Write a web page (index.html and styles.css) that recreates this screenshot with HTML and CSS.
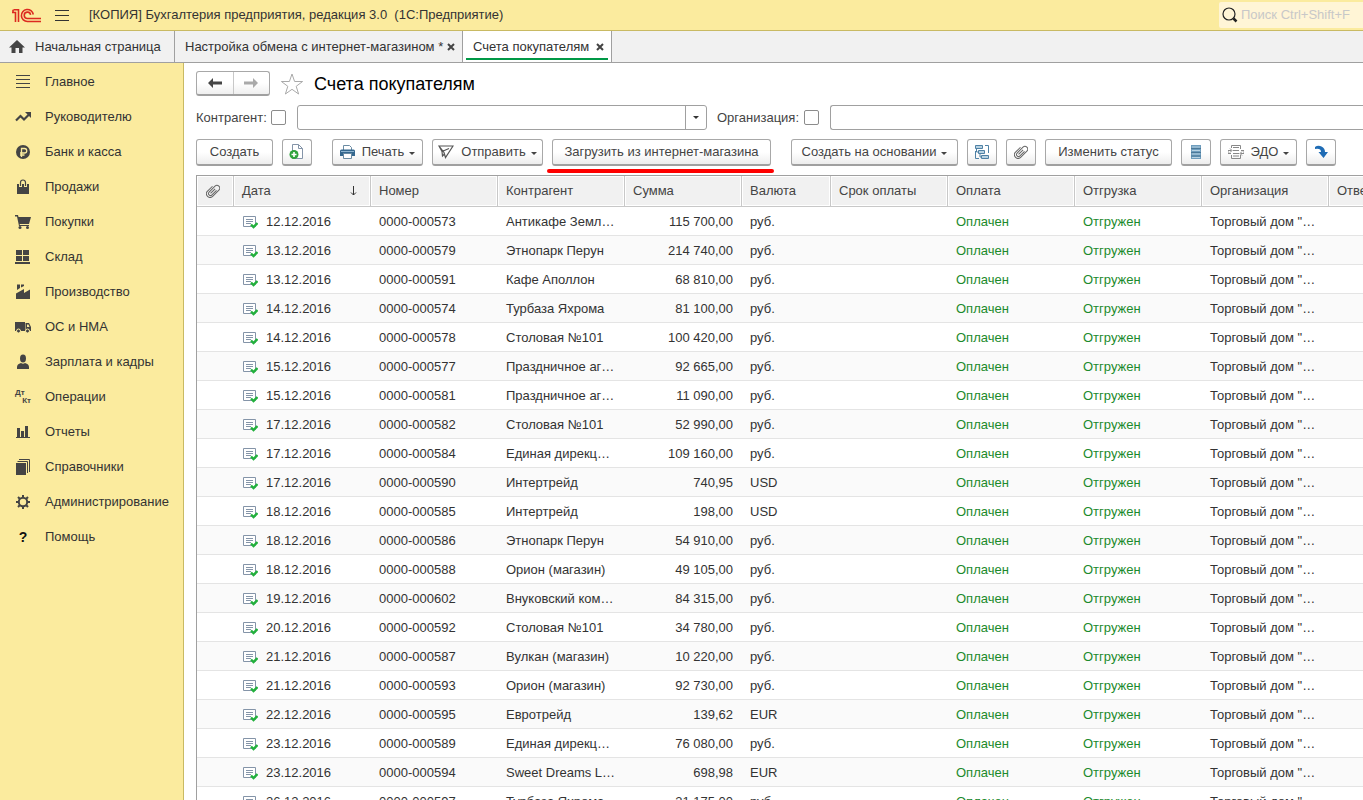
FILE: index.html
```html
<!DOCTYPE html>
<html lang="ru">
  <head>
    <meta charset="UTF-8">
    <title>Счета покупателям</title>
    <link rel="stylesheet" href="styles.css">
  </head>
  <body>
    <!-- Общие иконки -->
    <svg class="sprite" aria-hidden="true">
      <symbol id="clip" viewBox="0 0 14 14"><g transform="rotate(45 7 7)" fill="none" stroke="currentColor" stroke-width="1"><path d="M9 4v6.500a2 2 0 0 1-4 0V2.200a2.500 2.500 0 0 1 5.500 0V11a3.600 3.600 0 0 1-7.200 0V4M7 4v6.500"/></g></symbol>
      <symbol id="doc" viewBox="0 0 16 14"><path d="M1.500 1.500h12v10h-12z" fill="#fff" stroke="#8494a8"/><path d="M4 4.500h7M4 6.500h7M4 8.500h5" stroke="#8494a8"/><path d="M9 9.500l2.500 2.500 4-4" fill="none" stroke="#22b03c" stroke-width="2.400"/></symbol>
      <symbol id="caret" viewBox="0 0 6 3"><path d="M0 0h6L3 3z" fill="currentColor"/></symbol>
    </svg>

    <header class="topbar">
      <svg class="logo" viewBox="0 0 30 15" width="30" height="15" fill="none" stroke="#dc2a20" stroke-width="1.600"><path d="M0 4.500h3.500V14M1.500 1.800h5V14M1 1.800v2.500"/><path d="M21.300 6.500A6 6 0 1 0 15.500 13.500H29"/><path d="M18.600 6.800A3.200 3.200 0 1 0 15.500 10.500H29"/></svg>
      <button class="menu" aria-label="Меню"><svg width="14" height="11" stroke="#333"><path d="M0 .5h14M0 5.500h14M0 10.500h14"/></svg></button>
      <span class="app-name">[КОПИЯ] Бухгалтерия предприятия, редакция 3.0 &nbsp;(1С:Предприятие)</span>
      <label class="search">
        <svg width="16" height="16" fill="none" stroke="#222"><circle cx="7" cy="7" r="6" stroke-width="1.200"/><path d="M11.500 11.500l3 3" stroke-width="2.500"/></svg>
        <input type="text" placeholder="Поиск Ctrl+Shift+F" aria-label="Поиск">
      </label>
    </header>

    <nav class="tabs">
      <a href="#" class="tab home"><svg width="16" height="14" fill="#444"><path d="M8 0l8 7.500h-2.500V13H10V8H6.500v5H2.500V7.500H0z"/></svg>Начальная страница</a>
      <a href="#" class="tab exchange">Настройка обмена с интернет-магазином *<svg class="close" viewBox="0 0 8 8"><path d="M1 1l6 6M7 1L1 7"/></svg></a>
      <a href="#" class="tab active">Счета покупателям<svg class="close" viewBox="0 0 8 8"><path d="M1 1l6 6M7 1L1 7"/></svg></a>
    </nav>

    <div class="layout">
      <nav class="sidebar">
        <a href="#"><svg viewBox="0 0 16 16" stroke="#444"><path d="M1 1.500h14M1 5.500h14M1 9.500h14M1 13.500h14"/></svg>Главное</a>
        <a href="#"><svg viewBox="0 0 16 16"><path d="M1 11.500l4.500-4.500 3.500 3.500 5-5" fill="none" stroke="#444" stroke-width="2.200"/><path d="M10 3h6v6z"/></svg>Руководителю</a>
        <a href="#"><svg viewBox="0 0 16 16"><circle cx="8" cy="8" r="7"/><path d="M6.500 13V4.500h3a2 2 0 0 1 0 4.500H5M5 11h4.500" fill="none" stroke="#faeb9e" stroke-width="1.300"/></svg>Банк и касса</a>
        <a href="#"><svg viewBox="0 0 16 16"><path d="M2 5h12v10H2z"/><path d="M5.500 8V3.500a2.500 2.500 0 0 1 5 0V8" fill="none" stroke="#faeb9e" stroke-width="3"/><path d="M5.500 7V3.500a2.500 2.500 0 0 1 5 0V7" fill="none" stroke="#444" stroke-width="1.200"/></svg>Продажи</a>
        <a href="#"><svg viewBox="0 0 16 16"><path d="M0 1h3l.5 2H16l-2 7H4.500l.5 1h9v1H4L2 2.500H0z"/><circle cx="5" cy="13.500" r="1.500"/><circle cx="12.500" cy="13.500" r="1.500"/></svg>Покупки</a>
        <a href="#"><svg viewBox="0 0 16 16"><path d="M1 1h6v5H1zM8 1h6v5H8zM1 7h6v5H1zM8 7h6v5H8zM0 13h15v2H0z"/></svg>Склад</a>
        <a href="#"><svg viewBox="0 0 16 16"><path d="M1 15V9.500l8-4.500v4l6-3.500V15zM2 .5h3v3.500L2 6zM6 .5h3v1.500L6 3.500z"/></svg>Производство</a>
        <a href="#"><svg viewBox="0 0 16 16"><path d="M0 3h10v9H0zM10.500 4H14l2 4v4h-5.500z"/><path d="M12 5.500h1.500l1 2.500H12z" fill="#faeb9e"/><circle cx="3.500" cy="12" r="2" stroke="#faeb9e"/><circle cx="12.500" cy="12" r="2" stroke="#faeb9e"/></svg>ОС и НМА</a>
        <a href="#"><svg viewBox="0 0 16 16"><ellipse cx="8" cy="4.500" rx="3" ry="4"/><path d="M2 15v-2q0-3 4-4 2 1.500 4 0 4 1 4 4v2z"/></svg>Зарплата и кадры</a>
        <a href="#"><span class="dtkt" aria-hidden="true"><i>Дт</i><i>Кт</i></span>Операции</a>
        <a href="#"><svg viewBox="0 0 16 16"><path d="M2 4h3v9H2zM6 7h3v6H6zM10 2h3v11h-3zM1 13h14v1H1z"/></svg>Отчеты</a>
        <a href="#"><svg viewBox="0 0 16 16"><path d="M1 4h10v12H1z"/><path d="M2.500 2.500h10V14M4 .5h10.500V13" fill="none" stroke="#444"/></svg>Справочники</a>
        <a href="#"><svg viewBox="0 0 16 16" fill="none" stroke="#444"><circle cx="8" cy="8" r="4.200" stroke-width="2"/><path d="M8 1v2.500M8 12.500V15M1 8h2.500M12.500 8H15M3 3l2 2M11 11l2 2M3 13l2-2M11 5l2-2" stroke-width="2"/></svg>Администрирование</a>
        <a href="#"><span class="question" aria-hidden="true">?</span>Помощь</a>
      </nav>

      <main>
        <div class="title-row">
          <div class="history">
            <button aria-label="Назад"><svg width="14" height="10" fill="#444"><path d="M0 5l5-5v3.500h9v3H5V10z"/></svg></button>
            <button aria-label="Вперед"><svg width="14" height="10" fill="#aaa"><path d="M14 5L9 0v3.500H0v3h9V10z"/></svg></button>
          </div>
          <svg class="star" width="24" height="22" viewBox="0 0 24 22" fill="#fff" stroke="#aaa"><path d="M12 1l2.600 7.500h8l-6.400 4.800 2.400 7.700L12 16.300 5.400 21l2.400-7.700L1.400 8.500h8z"/></svg>
          <h1>Счета покупателям</h1>
        </div>

        <div class="filters">
          <label for="useContractor" class="name-contractor">Контрагент:</label>
          <input type="checkbox" id="useContractor">
          <div class="combo">
            <input type="text" aria-label="Контрагент">
            <button aria-label="Выбрать"><svg class="caret"><use href="#caret"/></svg></button>
          </div>
          <label for="useCompany" class="name-company">Организация:</label>
          <input type="checkbox" id="useCompany">
          <div class="combo wide">
            <input type="text" aria-label="Организация">
          </div>
        </div>

        <div class="toolbar">
          <div class="group">
            <button class="btn create">Создать</button>
            <button class="btn icon" aria-label="Скопировать"><svg width="16" height="16"><path d="M3.500.5h6l4 4v10h-10z" fill="#fff" stroke="#8494a8"/><path d="M9.500.5v4h4" fill="none" stroke="#8494a8"/><circle cx="5" cy="10.500" r="4.500" fill="#2fa33c"/><path d="M5 8v5M2.500 10.500h5" stroke="#fff" stroke-width="1.600"/></svg></button>
          </div>
          <div class="group">
            <button class="btn print"><svg width="15" height="14"><path d="M3.500.5h6l2 2v3h-8z" fill="#fff" stroke="#6a8ba3"/><path d="M0 6q0-1.500 1.500-1.500h12Q15 4.500 15 6v5H0z" fill="#35688f"/><path d="M1 6.500h13" stroke="#8fb5d0"/><path d="M3.500 8.500h8v5h-8z" fill="#fff" stroke="#6a8ba3"/></svg>Печать<svg class="caret"><use href="#caret"/></svg></button>
            <button class="btn send"><svg width="16" height="14" fill="none" stroke="#555" stroke-width="1.200"><path d="M1 1h14L7.500 12.500 6 7.500zM1 1l3 5.500L11 3.500M4 6.500L4.500 11l2-2"/></svg>Отправить<svg class="caret"><use href="#caret"/></svg></button>
            <div class="marked"><button class="btn load">Загрузить из интернет-магазина</button></div>
          </div>
          <div class="group">
            <button class="btn based">Создать на основании<svg class="caret"><use href="#caret"/></svg></button>
            <button class="btn icon" aria-label="Структура подчиненности"><svg width="16" height="16" fill="none" stroke="#4f81a5"><path d="M1.500 1.500h7v3h-7zM4.500 6.500h6v3h-6zM7.500 11.500h7v3h-7z" fill="#b8d2e2"/><path d="M11 1.500h3.500V9M1.500 7v7.500H5M2.500 4.500V8h2M6 9.500V13h1.500"/></svg></button>
            <button class="btn icon" aria-label="Файлы"><svg class="clip"><use href="#clip"/></svg></button>
            <button class="btn status">Изменить статус</button>
            <button class="btn icon" aria-label="Реестр"><svg width="10" height="14"><path d="M0 0h10v14H0z" fill="#6f9dbd"/><path d="M1 2h8M1 5.500h8M1 9h8M1 12.500h8" stroke="#b8d2e2"/><path d="M0 3.500h10M0 7.500h10M0 11h10" stroke="#4a7898"/></svg></button>
            <button class="btn edo"><svg width="16" height="14" fill="none" stroke="#888"><path d="M3.500 3V.5h9V4M3.500 10v3.500h9V10M5 2.500h6M5 5.500h6M5 8.500h6M5 11h6M0 5.500h3.500M2 3.500l2 2-2 2M0 5.500v3h3M16 8.500h-3.500M14 6.500l-2 2 2 2M16 8.500v-3h-3"/></svg>ЭДО<svg class="caret"><use href="#caret"/></svg></button>
            <button class="btn icon" aria-label="Перейти"><svg width="14" height="14" fill="#1f6cb5"><path d="M1 2q3-2 6.500-.5Q11 3 11 7h3l-4.500 6L4.500 7H7q0-4-6-3z"/></svg></button>
          </div>
        </div>

        <table class="invoices">
          <colgroup>
            <col class="c-file"><col class="c-date"><col class="c-text"><col class="c-text"><col class="c-sum"><col class="c-currency"><col class="c-sum"><col class="c-text"><col class="c-text"><col class="c-text"><col class="c-text">
          </colgroup>
          <thead>
            <tr>
              <th class="file"><svg class="clip"><use href="#clip"/></svg></th>
              <th>Дата<svg class="sort" width="7" height="10" fill="none" stroke="#333"><path d="M3.500 0v9M1 6.500L3.500 9 6 6.500"/></svg></th>
              <th>Номер</th>
              <th>Контрагент</th>
              <th>Сумма</th>
              <th>Валюта</th>
              <th>Срок оплаты</th>
              <th>Оплата</th>
              <th>Отгрузка</th>
              <th>Организация</th>
              <th>Ответственный</th>
            </tr>
          </thead>
          <tbody id="rows"></tbody>
        </table>
      </main>
    </div>

    <script>
      // дата, номер, контрагент, сумма, валюта
      var invoices = [
        ['12.12.2016', '0000-000573', 'Антикафе Земл…', '115 700,00', 'руб.'],
        ['13.12.2016', '0000-000579', 'Этнопарк Перун', '214 740,00', 'руб.'],
        ['13.12.2016', '0000-000591', 'Кафе Аполлон', '68 810,00', 'руб.'],
        ['14.12.2016', '0000-000574', 'Турбаза Яхрома', '81 100,00', 'руб.'],
        ['14.12.2016', '0000-000578', 'Столовая №101', '100 420,00', 'руб.'],
        ['15.12.2016', '0000-000577', 'Праздничное аг…', '92 665,00', 'руб.'],
        ['15.12.2016', '0000-000581', 'Праздничное аг…', '11 090,00', 'руб.'],
        ['17.12.2016', '0000-000582', 'Столовая №101', '52 990,00', 'руб.'],
        ['17.12.2016', '0000-000584', 'Единая дирекц…', '109 160,00', 'руб.'],
        ['17.12.2016', '0000-000590', 'Интертрейд', '740,95', 'USD'],
        ['18.12.2016', '0000-000585', 'Интертрейд', '198,00', 'USD'],
        ['18.12.2016', '0000-000586', 'Этнопарк Перун', '54 910,00', 'руб.'],
        ['18.12.2016', '0000-000588', 'Орион (магазин)', '49 105,00', 'руб.'],
        ['19.12.2016', '0000-000602', 'Внуковский ком…', '84 315,00', 'руб.'],
        ['20.12.2016', '0000-000592', 'Столовая №101', '34 780,00', 'руб.'],
        ['21.12.2016', '0000-000587', 'Вулкан (магазин)', '10 220,00', 'руб.'],
        ['21.12.2016', '0000-000593', 'Орион (магазин)', '92 730,00', 'руб.'],
        ['22.12.2016', '0000-000595', 'Евротрейд', '139,62', 'EUR'],
        ['23.12.2016', '0000-000589', 'Единая дирекц…', '76 080,00', 'руб.'],
        ['23.12.2016', '0000-000594', 'Sweet Dreams L…', '698,98', 'EUR'],
        ['26.12.2016', '0000-000597', 'Турбаза Яхрома', '31 175,00', 'руб.']
      ];

      document.getElementById('rows').innerHTML = invoices.map(function(r) {
        return '<tr><td></td>' +
          '<td><svg class="doc"><use href="#doc"/></svg>' + r[0] + '</td>' +
          '<td>' + r[1] + '</td>' +
          '<td>' + r[2] + '</td>' +
          '<td class="sum">' + r[3] + '</td>' +
          '<td>' + r[4] + '</td>' +
          '<td></td>' +
          '<td class="done">Оплачен</td>' +
          '<td class="done">Отгружен</td>' +
          '<td>Торговый дом "…</td>' +
          '<td></td></tr>';
      }).join('');
    </script>
  </body>
</html>
```
FILE: styles.css
```css
* { box-sizing: border-box; }
body { margin: 0; height: 100vh; overflow: hidden; display: flex; flex-direction: column; background: #fff; color: #333; font: 13px/16px "Liberation Sans", Arial, sans-serif; }
a { color: inherit; text-decoration: none; }
button, input { font: inherit; color: inherit; }
button { padding: 0; cursor: pointer; }
svg { flex: none; }
.sprite { display: none; }
.caret { width: 6px; height: 3px; }
.clip { width: 14px; height: 14px; color: #666; }

/* Шапка */
.topbar { flex: none; display: flex; align-items: center; height: 31px; padding-left: 12px; background: #fbeb9e; border-bottom: 1px solid #c9ba63; }
.menu { display: flex; margin: 0 20px 0 13px; background: none; border: 0; }
.app-name { white-space: nowrap; }
.search { display: flex; align-items: center; gap: 3px; width: 144px; height: 26px; margin-left: auto; padding-left: 3px; background: #fff5d6; border-radius: 2px 0 0 2px; }
.search input { width: 100%; min-width: 0; padding: 0; border: 0; outline: 0; background: none; }
.search input::placeholder { color: #c8c8c8; opacity: 1; }

/* Вкладки */
.tabs { flex: none; display: flex; height: 32px; background: #f1f1f1; border-bottom: 1px solid #a0a0a0; }
.tab { display: flex; align-items: center; justify-content: space-between; padding: 0 7px 0 10px; border-right: 1px solid #a0a0a0; white-space: nowrap; }
.tab.home { width: 175px; justify-content: flex-start; gap: 10px; padding-left: 9px; }
.tab.exchange { width: 288px; }
.tab.active { position: relative; width: 149px; background: #fff; }
.tab.active::after { content: ""; position: absolute; left: 3px; right: 3px; bottom: 2px; height: 2px; background: #009846; }
.close { width: 8px; height: 8px; stroke: #444; stroke-width: 2; }

.layout { flex: 1; display: flex; min-height: 0; }

/* Разделы */
.sidebar { flex: none; width: 184px; padding-top: 1px; background: #fbeb9e; border-right: 1px solid #c9ba63; }
.sidebar a { display: flex; align-items: center; gap: 14px; height: 35px; padding-left: 15px; white-space: nowrap; }
.sidebar svg { width: 16px; height: 16px; fill: #444; }
.sidebar svg[fill="none"] { fill: none; }
.question { width: 16px; text-align: center; font-weight: bold; font-size: 14px; color: #111; }
.dtkt { display: flex; flex-direction: column; width: 16px; font: bold 8px/8px "Liberation Sans", Arial, sans-serif; color: #444; }
.dtkt i { font-style: normal; }
.dtkt i:last-child { align-self: flex-end; }

main { flex: 1; min-width: 0; overflow: hidden; padding: 8px 0 0 12px; }
.title-row { display: flex; align-items: center; height: 25px; }
.history { display: flex; width: 74px; height: 25px; border: 1px solid #a8a8a8; border-bottom: 2px solid #a0a0a0; border-radius: 3px; background: linear-gradient(#fff 50%, #efefef); }
.history button { flex: 1; display: flex; align-items: center; justify-content: center; background: none; border: 0; }
.history button + button { border-left: 1px solid #c8c8c8; }
.star { margin: 0 10px; }
h1 { margin: 0; font-size: 18px; line-height: 24px; font-weight: normal; color: #000; }

/* Отбор */
.filters { display: flex; align-items: center; margin-top: 9px; }
.filters label { flex: none; white-space: nowrap; color: #444; }
.name-contractor { width: 75px; }
.name-company { width: 87px; margin-left: 10px; }
.filters input[type="checkbox"] { flex: none; appearance: none; width: 15px; height: 15px; margin: 0 11px 0 0; border: 1px solid #8c8c8c; border-radius: 2px; background: #fff; }
.combo { flex: none; display: flex; width: 410px; height: 25px; border: 1px solid #a0a0a0; border-radius: 3px; background: #fff; }
.combo.wide { flex: 1; width: auto; border-right: 0; border-radius: 3px 0 0 3px; }
.combo input { flex: 1; min-width: 0; padding: 0 6px; border: 0; outline: 0; background: none; }
.combo button { display: flex; align-items: center; justify-content: center; width: 21px; border: 0; border-left: 1px solid #a0a0a0; background: none; }

/* Команды */
.toolbar { display: flex; gap: 20px; margin-top: 9px; }
.group { display: flex; gap: 9px; }
.btn { flex: none; display: flex; align-items: center; justify-content: center; gap: 7px; height: 27px; border: 1px solid #a8a8a8; border-bottom: 2px solid #a0a0a0; border-radius: 3px; background: linear-gradient(#fff 50%, #ededed); color: #444; white-space: nowrap; }
.btn .caret { margin: 2px 0 0 -2px; }
.btn.icon { width: 30px; }
.create, .edo { width: 77px; }
.print { width: 91px; }
.send { width: 111px; }
.load { width: 219px; }
.based { width: 167px; }
.status { width: 127px; }
.marked { position: relative; }
.marked::after { content: ""; position: absolute; left: -5px; right: -3px; bottom: -7px; height: 4px; border-radius: 2px; background: #f00; }

/* Список счетов */
.invoices { width: 1258px; margin-top: 9px; table-layout: fixed; border-collapse: separate; border-spacing: 0; border: 1px solid #a0a0a0; }
.c-file { width: 37px; }
.c-date { width: 137px; }
.c-text { width: 127px; }
.c-sum { width: 117px; }
.c-currency { width: 89px; }
th, td { padding: 0 8px; overflow: hidden; white-space: nowrap; text-align: left; }
th { height: 31px; background: #f1f1f1; border-right: 1px solid #c8c8c8; border-bottom: 1px solid #c8c8c8; box-shadow: inset 0 0 0 1px #fff; font-weight: normal; color: #444; }
th.file { padding: 0 4px 0 0; text-align: center; }
.file .clip { display: block; margin: 0 auto; }
.sort { float: right; margin: 3px 5px 0 0; }
td { height: 29px; padding: 2px 0 0 8px; border-bottom: 1px solid #e4e4e4; }
tbody tr:nth-child(even) { background: #fafafa; }
.doc { width: 16px; height: 14px; margin-right: 8px; vertical-align: -3px; }
td.sum { padding-right: 9px; text-align: right; }
.done { color: #1c8a2c; }
```
